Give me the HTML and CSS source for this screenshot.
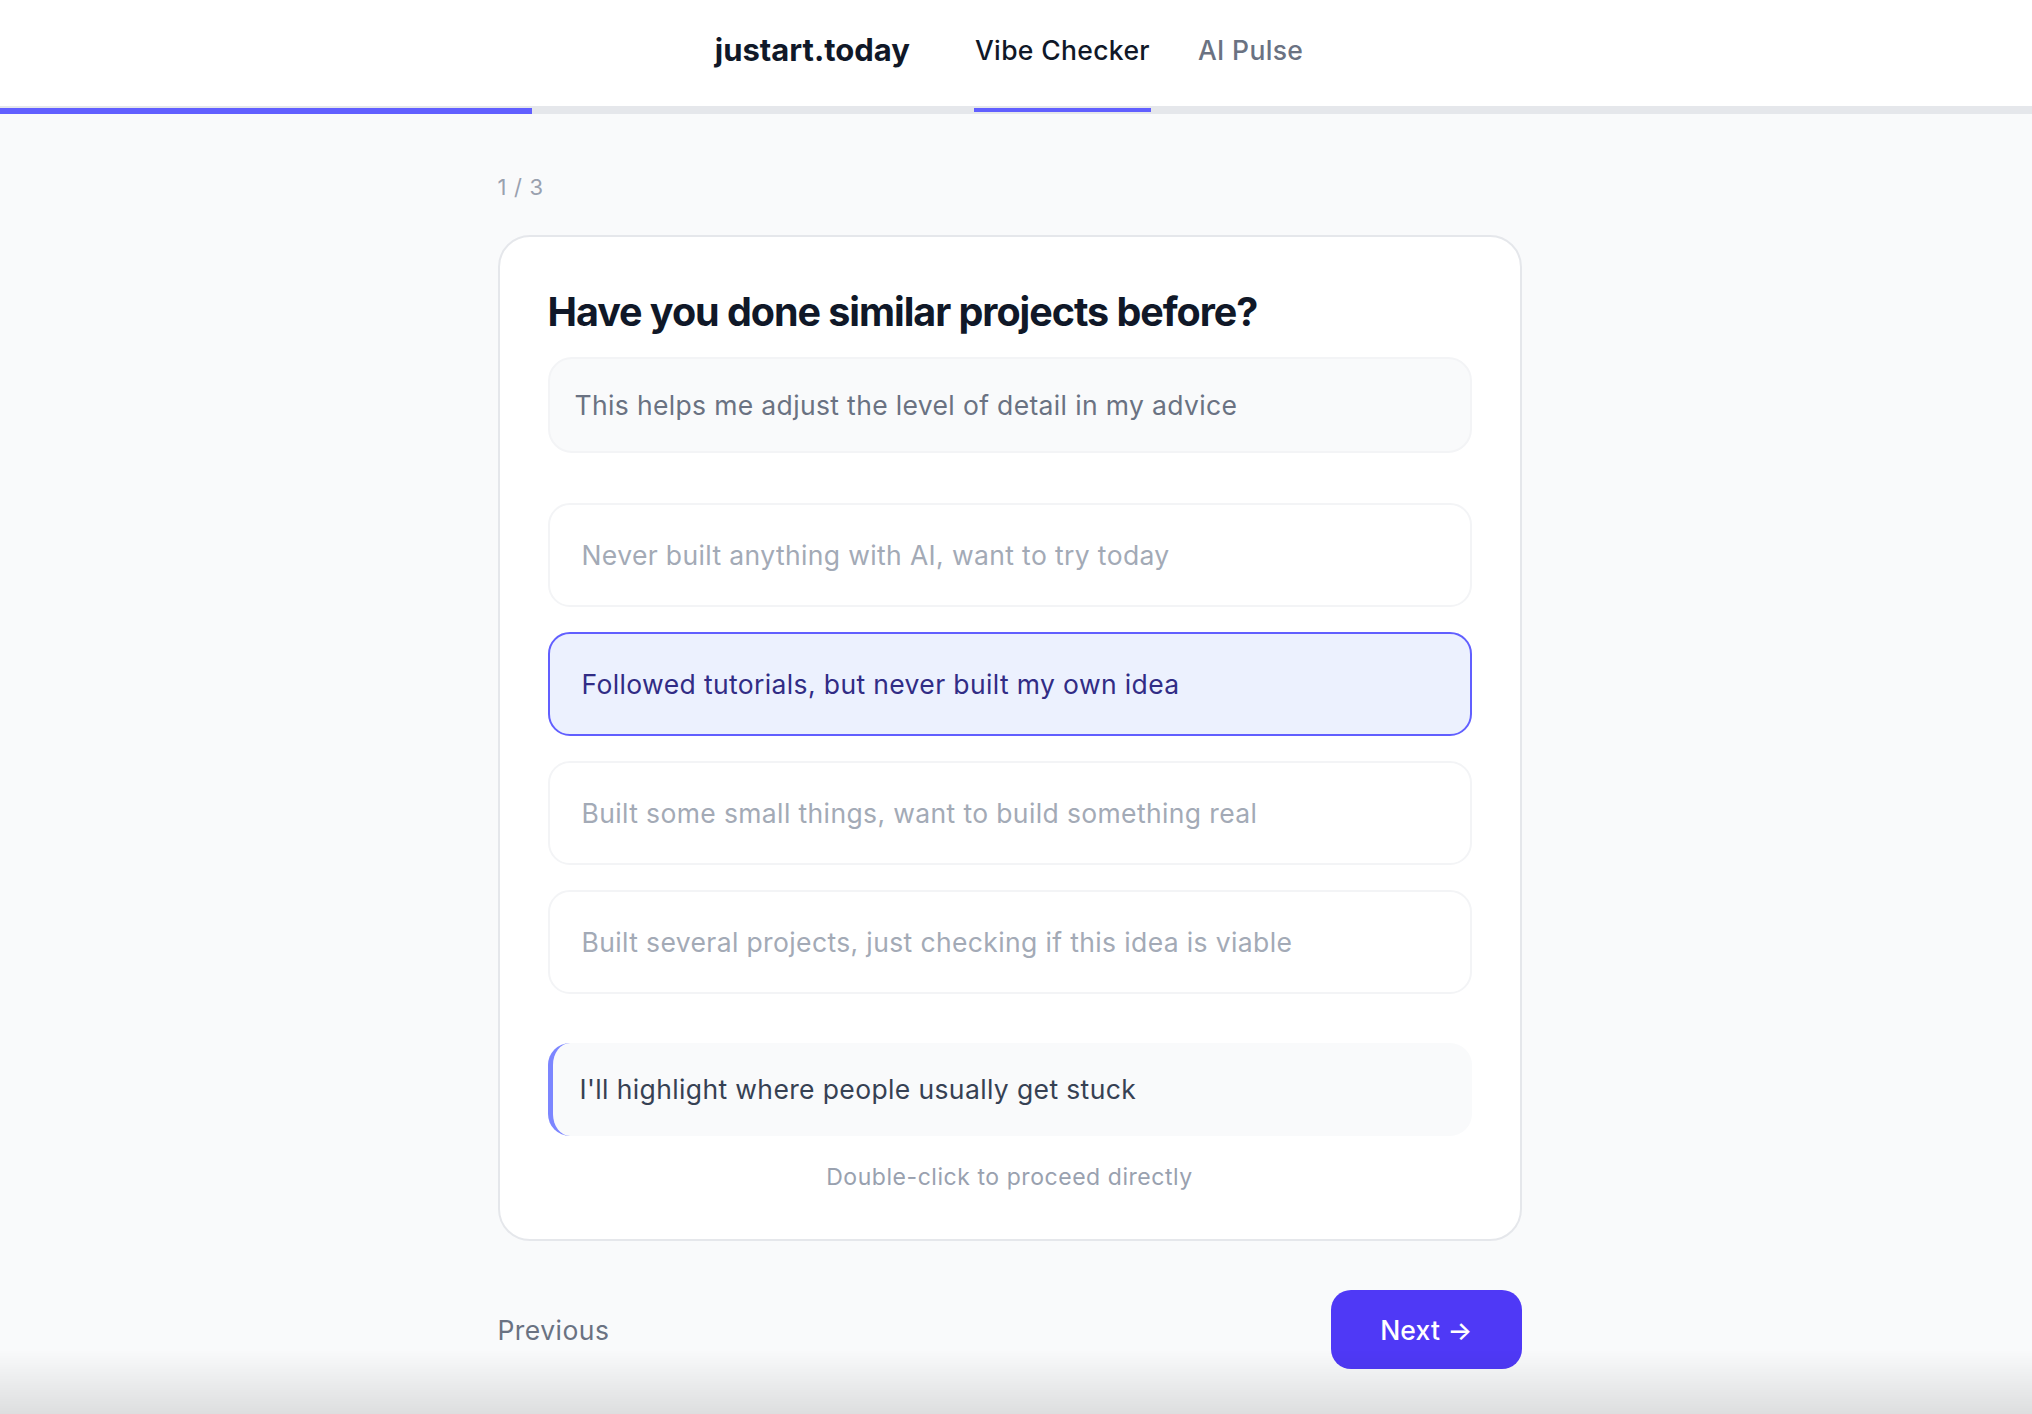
FILE: index.html
```html
<!DOCTYPE html>
<html lang="en">
<head>
<meta charset="utf-8">
<title>Vibe Checker – justart.today</title>
<link rel="stylesheet" href="styles.css">
</head>
<body>
<header class="topbar">
  <div class="topbar-inner">
    <span class="logo">justart.today</span>
    <nav class="nav">
      <a class="nav-link active">Vibe Checker</a>
      <a class="nav-link">AI Pulse</a>
    </nav>
  </div>
</header>
<div class="track"><div class="track-fill" style="width: 532px"></div></div>

<main class="page">
  <div class="wrap">
    <div class="step">1 / 3</div>
    <section class="card">
      <h1 class="question">Have you done similar projects before?</h1>
      <p class="hint">This helps me adjust the level of detail in my advice</p>
      <div class="options">
        <div class="option">Never built anything with AI, want to try today</div>
        <div class="option selected">Followed tutorials, but never built my own idea</div>
        <div class="option">Built some small things, want to build something real</div>
        <div class="option">Built several projects, just checking if this idea is viable</div>
      </div>
      <div class="tip">I'll highlight where people usually get stuck</div>
      <p class="dbl">Double-click to proceed directly</p>
    </section>
    <div class="footer">
      <button class="prev">Previous</button>
      <button class="next">Next <span class="arrow">→</span></button>
    </div>
  </div>
</main>
<div class="bottom-shade"></div>
</body>
</html>
```
FILE: styles.css
```css
* { box-sizing: border-box; }
html, body { margin: 0; padding: 0; }
body {
  background: #f9fafb;
  font-family: Inter, "Noto Sans", "Liberation Sans", sans-serif;
  color: #101828;
  min-height: 1414px;
}
.topbar {
  background: #ffffff;
  height: 106px;
  padding-right: 13px;
}
.topbar-inner {
  height: 106px;
  display: flex;
  justify-content: center;
  align-items: stretch;
  gap: 64px;
}
.logo {
  align-self: center;
  font-size: 31px;
  font-weight: 700;
  letter-spacing: 0;
  color: #101828;
  margin-top: -8px;
}
.nav {
  display: flex;
  gap: 46px;
}
.nav-link {
  position: relative;
  display: flex;
  align-items: center;
  font-size: 26.5px;
  font-weight: 500;
  letter-spacing: 0.35px;
  color: #6a7282;
  padding: 0 1px 6px;
}
.nav-link.active { color: #101828; }
.nav-link.active::after {
  content: "";
  position: absolute;
  left: 0;
  right: 0;
  bottom: -6px;
  height: 4px;
  background: #615fff;
  z-index: 2;
}
.track {
  height: 8px;
  background: #e5e7eb;
  padding-top: 2px;
}
.track-fill {
  height: 6px;
  background: #615fff;
}
.page {
  padding: 59px 13px 40px 0;
}
.wrap {
  width: 1024px;
  margin: 0 auto;
}
.step {
  font-size: 22px;
  line-height: 28px;
  letter-spacing: 0.7px;
  color: #99a1af;
  margin-bottom: 34px;
}
.card {
  background: #ffffff;
  border: 2px solid #e5e7eb;
  border-radius: 32px;
  padding: 48px 48px 47px;
}
.question {
  margin: 0 0 18px;
  font-size: 39.5px;
  line-height: 54px;
  font-weight: 650;
  letter-spacing: -1.05px;
  color: #101828;
}
.hint {
  margin: 0 0 50px;
  background: #f9fafb;
  border: 2px solid #f3f4f6;
  border-radius: 24px;
  padding: 27px 25px;
  font-size: 26.5px;
  line-height: 38px;
  letter-spacing: 0.35px;
  color: #6a7282;
}
.options {
  display: flex;
  flex-direction: column;
  gap: 25px;
  margin-bottom: 49px;
}
.option {
  border: 2px solid #f3f4f6;
  border-radius: 22px;
  background: #ffffff;
  padding: 30px 32px;
  font-size: 26.5px;
  line-height: 40px;
  letter-spacing: 0.37px;
  color: #a3aab6;
}
.option.selected {
  border-color: #615fff;
  background: #ecf1fe;
  color: #312c85;
}
.tip {
  background: #f9fafb;
  border-left: 5px solid #7c86ff;
  border-radius: 22px;
  padding: 28px 27px;
  font-size: 26.5px;
  line-height: 37px;
  letter-spacing: 0.37px;
  color: #364153;
}
.dbl {
  margin: 27px 0 0;
  text-align: center;
  font-size: 23px;
  line-height: 29px;
  letter-spacing: 0.55px;
  color: #99a1af;
}
.footer {
  margin-top: 49px;
  display: flex;
  justify-content: space-between;
  align-items: center;
}
.prev {
  background: none;
  border: none;
  padding: 0;
  font-family: inherit;
  font-size: 26.5px;
  letter-spacing: 0.45px;
  color: #6a7282;
}
.next {
  height: 79px;
  padding: 0 49px;
  border: none;
  border-radius: 20px;
  background: #4f39f6;
  color: #ffffff;
  font-family: inherit;
  font-size: 26.5px;
  font-weight: 500;
  letter-spacing: 0.2px;
}
.arrow { font-size: 26px; }
.bottom-shade {
  position: fixed;
  left: 0;
  right: 0;
  bottom: 0;
  height: 64px;
  background: linear-gradient(to bottom, rgba(0,0,0,0), rgba(0,0,0,0.11));
  pointer-events: none;
}
```
